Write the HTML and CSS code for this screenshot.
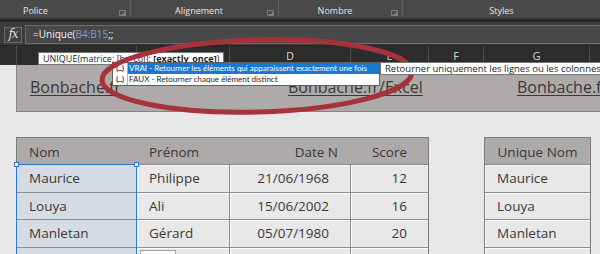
FILE: index.html
```html
<!DOCTYPE html>
<html lang="fr">
<head>
<meta charset="utf-8">
<title>UNIQUE - Bonbache</title>
<link rel="stylesheet" href="styles.css">
</head>
<body>
<div class="app">
  <div class="ribbon">
    <div class="grp g1"><span class="lbl">Police</span><i class="launch"></i></div>
    <div class="grp g2"><span class="lbl">Alignement</span><i class="launch"></i></div>
    <div class="grp g3"><span class="lbl">Nombre</span><i class="launch"></i></div>
    <div class="grp g4"><span class="lbl">Styles</span></div>
  </div>
  <div class="strip"></div>
  <div class="fbar">
    <div class="fx">fx</div>
    <div class="finput">=Unique(<span class="ref">B4:B15</span>;;</div>
  </div>
  <div class="colhdr">
    <div class="ch ca"></div>
    <div class="ch cb"></div>
    <div class="ch cc"></div>
    <div class="ch cd">D</div>
    <div class="ch ce">E</div>
    <div class="ch cf">F</div>
    <div class="ch cg">G</div>
    <div class="ch chh"></div>
  </div>
  <div class="sheet">
    <div class="band">
      <span class="link">Bonbache.fr</span>
      <span class="link">Bonbache.fr/Excel</span>
      <span class="link">Bonbache.fr</span>
    </div>
    <div class="tables">
      <div class="t main">
        <div class="hd c1">Nom</div>
        <div class="hd c2">Prénom</div>
        <div class="hd c3">Date N</div>
        <div class="hd c4">Score</div>

        <div class="cell c1 sel">Maurice</div>
        <div class="cell c2">Philippe</div>
        <div class="cell c3">21/06/1968</div>
        <div class="cell c4">12</div>

        <div class="cell c1 sel">Louya</div>
        <div class="cell c2">Ali</div>
        <div class="cell c3">15/06/2002</div>
        <div class="cell c4">16</div>

        <div class="cell c1 sel">Manletan</div>
        <div class="cell c2">Gérard</div>
        <div class="cell c3">05/07/1980</div>
        <div class="cell c4">20</div>

        <div class="cell c1 sel"></div>
        <div class="cell c2"><span class="mini"></span></div>
        <div class="cell c3"></div>
        <div class="cell c4"></div>

        <div class="selbox"><i class="hdl hl"></i><i class="hdl hr"></i></div>
      </div>
      <div class="t uniq">
        <div class="hd">Unique Nom</div>
        <div class="cell">Maurice</div>
        <div class="cell">Louya</div>
        <div class="cell">Manletan</div>
        <div class="cell"></div>
      </div>
    </div>
  </div>

  <div class="tip">UNIQUE(matrice; [by_col]; <b>[exactly_once]</b>)</div>
  <ul class="dd">
    <li class="on"><span class="arg">(...)</span>VRAI - Retourner les éléments qui apparaissent exactement une fois</li>
    <li><span class="arg">(...)</span>FAUX - Retourner chaque élément distinct</li>
  </ul>
  <svg class="ring" width="600" height="254" viewBox="0 0 600 254">
    <ellipse cx="257" cy="76" rx="155" ry="36" transform="rotate(-1.5 257 76)" fill="none" stroke="#a8323b" stroke-width="5"/>
  </svg>
  <div class="tip2">Retourner uniquement les lignes ou les colonnes qui apparaissent exactement une fois</div>
</div>
</body>
</html>
```

FILE: styles.css
```css
* { box-sizing: border-box; margin: 0; padding: 0; }
html, body { width: 600px; height: 254px; overflow: hidden; }
body { background: #e8e8e8; font-family: "Open Sans", "Noto Sans", sans-serif; color: #3a3838; }
.app { position: relative; width: 600px; height: 254px; overflow: hidden; }

/* ribbon */
.ribbon { display: flex; height: 17px; background: #4a4a4a; color: #e6e6e6; font-size: 9px; }
.grp { display: flex; align-items: flex-end; border-right: 1px solid #626262; height: 16px; }
.g1 { width: 131px; padding-left: 23px; }
.g2 { width: 148px; }
.g3 { width: 124px; }
.g4 { flex: 1; border-right: 0; }
.lbl { flex: 1; text-align: center; line-height: 10px; }
.g1 .lbl { text-align: left; }
.launch { width: 7px; height: 6px; border: 1px solid #7c7c7c; margin: 0 4px 0 0; position: relative; }
.launch::after { content: ""; position: absolute; left: 1px; top: 1px; width: 3px; height: 2px; border-right: 1px solid #8a8a8a; border-bottom: 1px solid #8a8a8a; }
.strip { height: 5px; background: #262626; border-top: 2px solid #3d3d3d; }

/* formula bar */
.fbar { height: 23px; background: #3b3b3b; display: flex; align-items: flex-start; padding: 3px 0 0 4px; gap: 3px; }
.fx { width: 18px; height: 16px; margin-top: 2px; border: 1px solid #6b6b6b; background: #404040; color: #dcdcdc; font: italic 12px/13px "DejaVu Serif", "Liberation Serif", serif; text-align: center; letter-spacing: -1px; }
.finput { flex: 1; height: 19px; border: 1px solid #6a6a6a; border-right: 0; background: #484848; color: #f2f2f2; font-size: 10px; line-height: 17px; padding-left: 7px; }
.ref { color: #6aa6e0; }

/* column headers */
.colhdr { display: flex; height: 20px; background: #2c2c2c; border-top: 1px solid #262626; color: #d6d6d6; font-size: 11px; line-height: 19px; }
.ch { border-left: 1px solid #4c4c4c; text-align: center; }
.ca { width: 16px; border-left: 0; }
.cb { width: 120px; }
.cc { width: 93px; }
.cd { width: 121px; }
.ce { width: 78px; }
.cf { width: 55px; }
.cg { width: 106px; }
.chh { flex: 1; }

/* sheet */
.sheet { background: #e8e8e8; }
.band { margin-left: 16px; height: 47px; background: #aeaaaa; border-left: 1px solid #8a8787; border-bottom: 1px solid #878484; display: grid; grid-template-columns: 258px 229px auto; padding: 11px 0 0 13px; white-space: nowrap; }
.link { font-size: 16px; line-height: 22px; text-decoration: underline; text-decoration-thickness: 1px; text-underline-offset: 2px; color: #3a3838; }

.tables { display: flex; gap: 55px; padding: 25px 0 0 16px; align-items: flex-start; }
.t { display: grid; border: 1px solid #7e7b7b; border-bottom: 0; font-size: 13.5px; position: relative; }
.main { grid-template-columns: 120px 93px 121px 77px; }
.uniq { grid-template-columns: 105px; }
.hd { background: #aeaaaa; height: 27px; line-height: 26px; padding-top: 1px; border-bottom: 1px solid #8a8686; white-space: nowrap; color: #3a3838; }
.cell { height: 27.5px; line-height: 27px; border-bottom: 1px solid #8e8e8e; border-right: 1px solid #8e8e8e; box-shadow: inset 1px 1px 0 #fbfbfb; background: #e8e8e8; white-space: nowrap; color: #3a3838; }
.c4.cell, .uniq .cell { border-right: 0; }
.c1, .c2 { padding-left: 12px; }
.hd.c3 { text-align: right; padding-right: 13px; }
.hd.c4 { text-align: right; padding-right: 21px; }
.cell.c3, .cell.c4 { text-align: right; padding-right: 21px; }
.uniq .hd { text-align: center; }
.uniq .cell { padding-left: 12px; }
.cell.sel { background: #d6dce4; box-shadow: none; }
.mini { display: inline-block; width: 36px; height: 10px; margin: 2px 0 0 -9px; background: #fafafa; border: 1px solid #a0a0a0; vertical-align: top; }

.selbox { position: absolute; left: -1px; top: 26px; width: 121px; height: 130px; border: 1px solid #2f74d0; border-bottom: 0; pointer-events: none; }
.hdl { position: absolute; top: -3px; width: 5px; height: 5px; background: #fff; border: 1px solid #2f74d0; }
.hl { left: -3px; }
.hr { right: -3px; }

/* overlays */
.tip { position: absolute; left: 38px; top: 52px; height: 13px; padding: 0 4px; background: #fff; border: 1px solid #767676; font-size: 9px; line-height: 11px; color: #1e1e1e; white-space: nowrap; z-index: 1; }
.tip b { font-weight: 700; }
.dd { position: absolute; left: 112px; top: 62px; width: 268px; list-style: none; background: #fff; border: 1px solid #5f5f5f; z-index: 2; font-family: Lato, "Open Sans", sans-serif; font-size: 8px; color: #1e1e1e; }
.dd li { height: 11px; line-height: 11px; white-space: nowrap; overflow: hidden; display: flex; align-items: center; }
.dd li.on { background: #1a78d2; color: #fff; }
.arg { display: inline-block; flex: none; width: 15px; height: 11px; line-height: 10px; text-align: center; margin-right: 1px; background: #fff; color: #111; font-weight: 700; font-size: 7px; letter-spacing: -0.3px; border: 1px solid #b0b0b0; border-width: 0 1px 0 0; }
.ring { position: absolute; left: 0; top: 0; z-index: 3; pointer-events: none; }
.tip2 { position: absolute; left: 380px; top: 62px; height: 13px; padding: 0 4px; background: #fff; border: 1px solid #767676; font-size: 9.5px; line-height: 11px; color: #1e1e1e; white-space: nowrap; z-index: 4; }
```
